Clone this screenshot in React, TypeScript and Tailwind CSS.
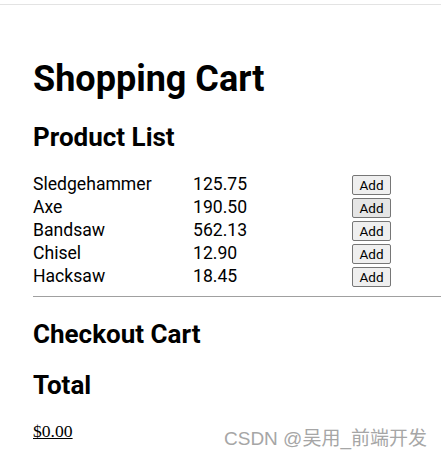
const products = [
  { name: "Sledgehammer", price: "125.75" },
  { name: "Axe", price: "190.50" },
  { name: "Bandsaw", price: "562.13" },
  { name: "Chisel", price: "12.90" },
  { name: "Hacksaw", price: "18.45" },
]

export default function App() {
  return (
    <div className="relative h-[457px] w-[441px] overflow-hidden bg-white text-black font-['Roboto',sans-serif]">
      <div className="h-[4px]" />
      <div className="border-t border-[#e3e3e3]" />

      <div className="pl-[33px]">
        <h1 className="mt-[54px] text-[36px] font-bold leading-[40px]">Shopping Cart</h1>
        <h2 className="mt-[23px] text-[26px] font-bold leading-[30px]">Product List</h2>

        <div className="mt-[21px] text-[17.6px] leading-[23px]">
          {products.map((p) => (
            <div key={p.name} className="grid h-[23px] grid-cols-[160px_159px_39px] items-center">
              <span>{p.name}</span>
              <span>{p.price}</span>
              <button
                className={`h-[20px] w-[39px] rounded-[2px] border border-[#767676] text-[13.5px] leading-[18px] ${
                  p.name === "Axe" ? "bg-[#e5e5e5] border-[#4f4f4f]" : "bg-[#efefef]"
                }`}
              >
                Add
              </button>
            </div>
          ))}
        </div>

        <div className="mt-[8px] border-t border-[#a0a0a0]" />

        <h2 className="mt-[22px] text-[26px] font-bold leading-[30px]">Checkout Cart</h2>
        <h2 className="mt-[21px] text-[26px] font-bold leading-[30px]">Total</h2>
        <p className="mt-[20px] text-[17.6px] leading-[23px] font-['Liberation_Serif',serif]">
          <span className="underline">$0.00</span>
        </p>
      </div>

      {/* watermark */}
      <div className="absolute left-[224px] top-[426px] text-[19px] leading-[26px] text-[#a6a6a6] font-['Liberation_Sans','Noto_Sans_CJK_SC',sans-serif]">
        CSDN @吴用_前端开发
      </div>
    </div>
  )
}
